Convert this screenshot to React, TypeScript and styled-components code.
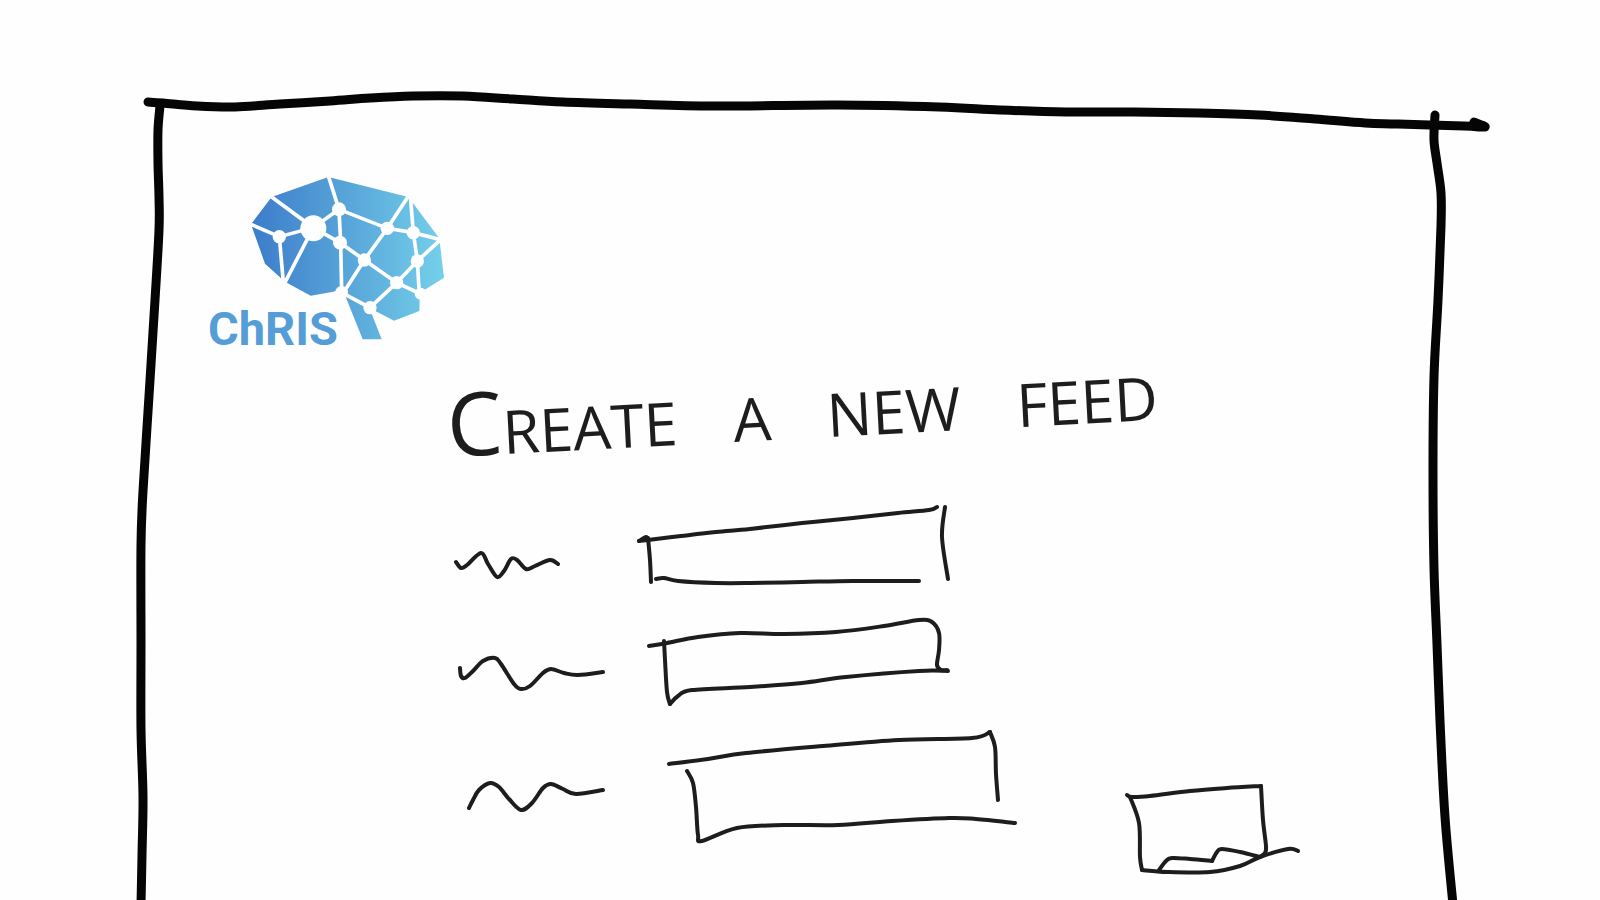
import React from "react";
import styled, { createGlobalStyle } from "styled-components";

const GlobalStyle = createGlobalStyle`
  *, *::before, *::after { box-sizing: border-box; }
  body { margin: 0; background: #fefefe; }
`;

type Point = [number, number];

/* Turns a list of pen positions into one smooth stroke. */
const pen = (points: Point[]): string => {
  let d = `M${points[0][0]} ${points[0][1]}`;
  for (let i = 0; i < points.length - 1; i += 1) {
    const a = points[i - 1] ?? points[i];
    const b = points[i];
    const c = points[i + 1];
    const e = points[i + 2] ?? c;
    d += `C${b[0] + (c[0] - a[0]) / 6} ${b[1] + (c[1] - a[1]) / 6} ${
      c[0] - (e[0] - b[0]) / 6
    } ${c[1] - (e[1] - b[1]) / 6} ${c[0]} ${c[1]}`;
  }
  return d;
};

const Page = styled.main`
  position: relative;
  min-height: 100vh;
  overflow: hidden;
  font-family: "Open Sans", "Liberation Sans", sans-serif;
  color: #1d1d1d;
`;

const FrameLines = styled.svg`
  position: absolute;
  inset: 0;
  width: 100%;
  height: 100%;
  fill: none;
  stroke: #050505;
  stroke-width: 9px;
  stroke-linecap: round;
  stroke-linejoin: round;
  pointer-events: none;

  path { vector-effect: non-scaling-stroke; }
`;

const Header = styled.header`
  position: relative;
  padding: 176px 13vw 0;
`;

const Logo = styled.a`
  display: inline-grid;
  width: 237px;
  height: 173px;
  text-decoration: none;
  color: #549dd6;
`;

const Brain = styled.svg`
  grid-area: 1 / 1;
  justify-self: end;
  width: 195px;
  height: 165px;
`;

const LogoName = styled.span`
  grid-area: 1 / 1;
  place-self: end start;
  font: 700 47px/40px Roboto, "Liberation Sans", sans-serif;
`;

const Form = styled.form`
  position: relative;
  padding-left: 28vw;
`;

const Title = styled.h1`
  display: flex;
  align-items: baseline;
  gap: 56px;
  height: 151px;
  margin: 0;
  padding-top: 26px;
  font-size: 60px;
  font-weight: 400;
  line-height: 96px;
  white-space: nowrap;
  transform: rotate(-3deg);
  transform-origin: 0 100px;
`;

const Word = styled.span`
  display: block;

  &:first-child::first-letter { font-size: 88px; }
`;

const Body = styled.div`
  display: flex;
  align-items: flex-end;
  gap: 90px;
`;

const Fields = styled.div`
  display: flex;
  flex-direction: column;
  padding-bottom: 35px;
`;

const Row = styled.div`
  display: grid;
  grid-template-columns: 162px 400px;
  column-gap: 20px;
  height: 115px;
`;

const Sketch = styled.svg`
  display: block;
  width: 100%;
  height: 100%;
  overflow: visible;
  fill: none;
  stroke: #1d1d1d;
  stroke-width: 4px;
  stroke-linecap: round;
  stroke-linejoin: round;
`;

const Label = styled.label`
  display: block;
  height: 115px;
`;

const Field = styled.div`
  display: grid;
  height: 115px;

  > * { grid-area: 1 / 1; }
`;

const Input = styled.input`
  z-index: 1;
  align-self: center;
  width: 260px;
  height: 40px;
  margin-left: 48px;
  padding: 0;
  border: 0;
  outline: 0;
  background: transparent;
  font: inherit;
  font-size: 24px;
  color: inherit;
`;

const Submit = styled.button`
  width: 190px;
  height: 100px;
  padding: 0;
  border: 0;
  background: transparent;
  cursor: pointer;
`;

const frame: Point[][] = [
  [[148, 102], [163, 103], [197, 106], [235, 107], [280, 104], [330, 101], [370, 98], [413, 96], [463, 96], [513, 99], [563, 102], [630, 104], [714, 106], [837, 105], [939, 107], [1000, 110], [1066, 112], [1133, 112], [1199, 113], [1259, 115], [1315, 119], [1365, 123], [1398, 124], [1464, 126], [1485, 127], [1474, 122]],
  [[160, 106], [158, 130], [158, 163], [159, 197], [159, 230], [155, 300], [149, 396], [143, 491], [141, 545], [141, 644], [141, 729], [143, 797], [142, 855], [141, 905]],
  [[1435, 115], [1434, 140], [1437, 163], [1441, 193], [1441, 226], [1438, 300], [1434, 377], [1433, 472], [1434, 568], [1437, 644], [1440, 721], [1445, 817], [1453, 905]],
];

interface FieldSpec {
  id: string;
  name: string;
  top: number;
  squiggle: Point[];
  box: Point[][];
}

const fields: FieldSpec[] = [
  {
    id: "feed-name",
    name: "Feed name",
    top: 500,
    squiggle: [[456, 562], [461, 568], [467, 565], [481, 553], [488, 564], [497, 577], [504, 571], [511, 559], [517, 560], [526, 569], [535, 566], [550, 560], [558, 564]],
    box: [
      [[639, 541], [646, 537], [648, 540]],
      [[639, 541], [648, 540], [681, 536], [716, 532], [750, 529], [802, 523], [853, 518], [898, 513], [929, 510], [937, 507]],
      [[648, 538], [650, 560], [651, 582]],
      [[945, 507], [942, 537], [948, 579]],
      [[656, 579], [664, 578], [678, 581], [716, 583], [750, 583], [802, 582], [853, 581], [919, 581]],
    ],
  },
  {
    id: "feed-tags",
    name: "Tags",
    top: 615,
    squiggle: [[460, 668], [461, 676], [465, 678], [473, 671], [483, 661], [495, 658], [501, 664], [514, 684], [521, 689], [530, 686], [543, 673], [551, 669], [564, 673], [578, 675], [603, 672]],
    box: [
      [[649, 646], [667, 643], [698, 637], [740, 633], [784, 634], [836, 632], [884, 626], [919, 620], [932, 622], [939, 633], [939, 650], [937, 665], [941, 670], [947, 670]],
      [[948, 671], [919, 671], [846, 677], [802, 683], [750, 687], [692, 690], [678, 696], [670, 704]],
      [[670, 704], [667, 692], [665, 660], [664, 641]],
    ],
  },
  {
    id: "feed-note",
    name: "Description",
    top: 730,
    squiggle: [[469, 808], [473, 800], [479, 790], [490, 783], [499, 787], [509, 799], [521, 810], [532, 803], [543, 788], [551, 784], [563, 789], [576, 794], [603, 790]],
    box: [
      [[669, 764], [708, 759], [746, 753], [823, 746], [899, 740], [972, 738], [990, 732]],
      [[990, 732], [995, 747], [996, 774], [998, 800]],
      [[687, 771], [693, 783], [696, 807], [698, 835], [702, 841], [737, 828], [784, 825], [838, 825], [892, 821], [949, 818], [976, 819], [1015, 823]],
    ],
  },
];

const submitLines: Point[][] = [
  [[1127, 795], [1132, 797], [1150, 796], [1190, 791], [1227, 788], [1261, 786]],
  [[1261, 786], [1263, 820], [1266, 846], [1265, 853], [1260, 857]],
  [[1260, 857], [1240, 852], [1222, 849], [1217, 852], [1212, 861]],
  [[1212, 861], [1190, 859], [1172, 858], [1166, 861], [1159, 870]],
  [[1130, 797], [1139, 823], [1140, 857], [1142, 870]],
  [[1142, 870], [1167, 872], [1210, 872], [1240, 866], [1260, 857], [1288, 849], [1298, 851]],
];

const links = [
  "M183 190 268 227 370 200 447 145 415 45",
  "M242 106 370 200 285 364",
  "M268 227 280 364",
  "M370 200 450 245 523 297 620 365 705 405",
  "M447 145 452 245 455 390",
  "M447 145 592 202 670 215 752 236 682 300 620 365 540 440 465 400",
  "M465 388 523 297 592 202 656 104",
  "M661 104 670 215 682 300 688 400",
];

const nodes: [number, number, number][] = [
  [268, 227, 20], [370, 202, 39], [447, 145, 21], [450, 245, 21],
  [523, 297, 20], [592, 202, 20], [670, 215, 20], [682, 300, 20],
  [620, 365, 20], [540, 440, 20], [692, 398, 18], [455, 394, 19],
];

const App: React.FC = () => (
  <Page>
    <GlobalStyle />
    <FrameLines viewBox="0 0 1600 900" preserveAspectRatio="none" aria-hidden="true">
      {frame.map((line, i) => (
        <path key={i} d={pen(line)} />
      ))}
    </FrameLines>

    <Header>
      <Logo href="#">
        <Brain viewBox="180 45 585 495" aria-hidden="true">
          <defs>
            <linearGradient id="brain" gradientUnits="userSpaceOnUse" x1="190" y1="0" x2="760" y2="0">
              <stop offset="0" stopColor="#3c7dca" />
              <stop offset="0.4" stopColor="#539dd6" />
              <stop offset="1" stopColor="#74d0ea" />
            </linearGradient>
          </defs>
          <path
            fill="url(#brain)"
            d="M183 190 245 108 415 48 655 108 748 232 762 350 708 384 690 392 688 450 612 479 556 450 545 458 575 535 518 535 466 405 455 384 430 392 362 404 285 362 225 308Z"
          />
          <g fill="none" stroke="#fefefe" strokeWidth="11">
            {links.map((d) => (
              <path key={d} d={d} />
            ))}
          </g>
          <g fill="#fefefe">
            {nodes.map(([cx, cy, r]) => (
              <circle key={`${cx}-${cy}`} cx={cx} cy={cy} r={r} />
            ))}
          </g>
        </Brain>
        <LogoName>ChRIS</LogoName>
      </Logo>
    </Header>

    <Form onSubmit={(event) => event.preventDefault()}>
      <Title>
        <Word>CREATE</Word>
        <Word>A</Word>
        <Word>NEW</Word>
        <Word>FEED</Word>
      </Title>

      <Body>
        <Fields>
          {fields.map((field) => (
            <Row key={field.id}>
              <Label htmlFor={field.id} aria-label={field.name}>
                <Sketch viewBox={`448 ${field.top} 162 115`} aria-hidden="true">
                  <path d={pen(field.squiggle)} />
                </Sketch>
              </Label>
              <Field>
                <Sketch viewBox={`630 ${field.top} 400 115`} aria-hidden="true">
                  {field.box.map((line, i) => (
                    <path key={i} d={pen(line)} />
                  ))}
                </Sketch>
                <Input id={field.id} type="text" aria-label={field.name} />
              </Field>
            </Row>
          ))}
        </Fields>
        <Submit type="submit" aria-label="Create feed">
          <Sketch viewBox="1120 780 190 100" aria-hidden="true">
            {submitLines.map((line, i) => (
              <path key={i} d={pen(line)} />
            ))}
          </Sketch>
        </Submit>
      </Body>
    </Form>
  </Page>
);

export default App;
